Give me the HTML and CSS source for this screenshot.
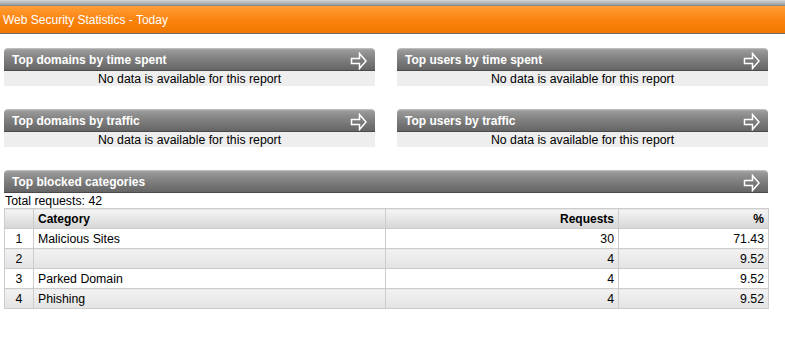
FILE: index.html
```html
<!DOCTYPE html>
<html>
<head>
<meta charset="utf-8">
<link rel="stylesheet" href="styles.css">
</head>
<body>
<div class="topbar"><div class="topbar-inner">Web Security Statistics - Today</div></div>
<div class="content">
  <div class="grid">
    <div class="panel">
      <div class="panel-head"><span>Top domains by time spent</span><svg class="arrow" width="17" height="18" viewBox="0 0 17 18"><path d="M1.5 6.5H9.5V1.5L16 9L9.5 16.5V11.5H1.5Z" fill="none" stroke="#fff" stroke-width="1.5"/></svg></div>
      <div class="panel-body">No data is available for this report</div>
    </div>
    <div class="panel">
      <div class="panel-head"><span>Top users by time spent</span><svg class="arrow" width="17" height="18" viewBox="0 0 17 18"><path d="M1.5 6.5H9.5V1.5L16 9L9.5 16.5V11.5H1.5Z" fill="none" stroke="#fff" stroke-width="1.5"/></svg></div>
      <div class="panel-body">No data is available for this report</div>
    </div>
    <div class="panel">
      <div class="panel-head"><span>Top domains by traffic</span><svg class="arrow" width="17" height="18" viewBox="0 0 17 18"><path d="M1.5 6.5H9.5V1.5L16 9L9.5 16.5V11.5H1.5Z" fill="none" stroke="#fff" stroke-width="1.5"/></svg></div>
      <div class="panel-body">No data is available for this report</div>
    </div>
    <div class="panel">
      <div class="panel-head"><span>Top users by traffic</span><svg class="arrow" width="17" height="18" viewBox="0 0 17 18"><path d="M1.5 6.5H9.5V1.5L16 9L9.5 16.5V11.5H1.5Z" fill="none" stroke="#fff" stroke-width="1.5"/></svg></div>
      <div class="panel-body">No data is available for this report</div>
    </div>
  </div>
  <div class="panel wide">
    <div class="panel-head"><span>Top blocked categories</span><svg class="arrow" width="17" height="18" viewBox="0 0 17 18"><path d="M1.5 6.5H9.5V1.5L16 9L9.5 16.5V11.5H1.5Z" fill="none" stroke="#fff" stroke-width="1.5"/></svg></div>
    <div class="total">Total requests: 42</div>
    <table class="data">
      <colgroup><col class="c1"><col class="c2"><col class="c3"><col class="c4"></colgroup>
      <thead>
        <tr><th></th><th class="left">Category</th><th class="right">Requests</th><th class="right">%</th></tr>
      </thead>
      <tbody>
        <tr><td class="center">1</td><td>Malicious Sites</td><td class="right">30</td><td class="right">71.43</td></tr>
        <tr class="alt"><td class="center">2</td><td></td><td class="right">4</td><td class="right">9.52</td></tr>
        <tr><td class="center">3</td><td>Parked Domain</td><td class="right">4</td><td class="right">9.52</td></tr>
        <tr class="alt"><td class="center">4</td><td>Phishing</td><td class="right">4</td><td class="right">9.52</td></tr>
      </tbody>
    </table>
  </div>
</div>
</body>
</html>
```
FILE: styles.css
```css
html, body {
  margin: 0;
  padding: 0;
  background: #fff;
  font-family: "Liberation Sans", Arial, sans-serif;
  font-size: 12px;
  color: #000;
}
.topbar {
  padding-top: 5px;
  background: linear-gradient(#d4d6d8, #9a9ca0 5px);
  border-bottom: 1px solid #6e6a66;
}
.topbar-inner {
  height: 27px;
  line-height: 29px;
  padding-left: 3px;
  color: #fff;
  background: linear-gradient(#ffa443 0px, #ff9a30 2px, #fb8410 50%, #f07800 100%);
  border-top: 1px solid #8b8a88;
}
.content {
  padding: 14px 17px 0 4px;
}
.grid {
  display: grid;
  grid-template-columns: 371px 371px;
  column-gap: 22px;
  row-gap: 23px;
}
.panel-head {
  height: 23px;
  box-sizing: border-box;
  border-radius: 4px 4px 0 0;
  background: linear-gradient(#a6a6a6 0px, #979797 2px, #7e7e7e 50%, #656565 100%);
  border-top: 1px solid #bdbdbd;
  border-bottom: 1px solid #4a4a4a;
  color: #fff;
  font-weight: bold;
  display: flex;
  align-items: center;
  justify-content: space-between;
  padding: 0 8px 0 8px;
}
.panel-head span {
  line-height: 21px;
  padding-top: 2px;
}
.arrow {
  display: block;
  margin-top: 3px;
}
.panel-body {
  height: 15px;
  line-height: 16px;
  background: #eeeeee;
  text-align: center;
  font-size: 12.3px;
}
.wide {
  margin-top: 23px;
  width: 764px;
}
.total {
  line-height: 17px;
  height: 15px;
  padding-left: 1px;
  font-size: 12.3px;
}
table.data {
  width: 764px;
  border-collapse: collapse;
  table-layout: fixed;
  font-size: 12.3px;
}
col.c1 { width: 29px; }
col.c2 { width: 352px; }
col.c3 { width: 233px; }
col.c4 { width: 150px; }
table.data tr { height: 20px; }
table.data th, table.data td {
  border: 1px solid #cccccc;
  padding: 1px 4px 0 4px;
  line-height: 15px;
  white-space: nowrap;
}
table.data th {
  background: linear-gradient(#f5f5f5, #d6d6d6);
  font-weight: bold;
  font-size: 12px;
}
table.data td { background: #fff; }
table.data tr.alt td {
  background: linear-gradient(#f2f2f2, #e3e3e3);
}
.left { text-align: left; }
.right { text-align: right; }
.center { text-align: center; }
```
